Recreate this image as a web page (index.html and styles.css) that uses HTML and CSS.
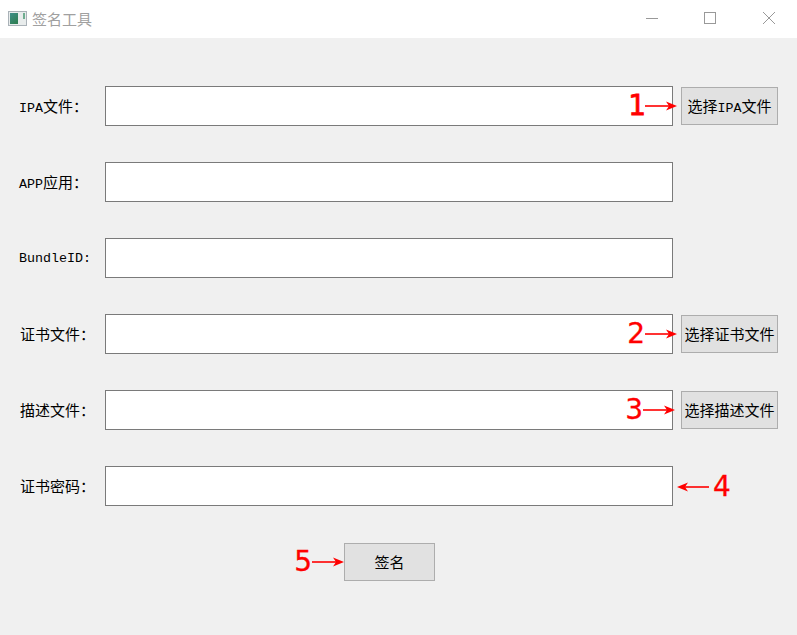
FILE: index.html
```html
<!DOCTYPE html>
<html lang="zh-CN">
<head>
<meta charset="UTF-8">
<meta name="viewport" content="width=device-width, initial-scale=1.0">
<title>签名工具</title>
<link rel="stylesheet" href="styles.css">
</head>
<body>
    <svg class="defs" width="0" height="0">
        <defs>
            <linearGradient id="iconFill" x1="0" y1="0" x2="0.6" y2="1">
                <stop offset="0" stop-color="#3f8f8a"/>
                <stop offset="1" stop-color="#2f7f55"/>
            </linearGradient>
            <symbol id="arrowRight" viewBox="0 0 32 12">
                <path d="M0 6H27" stroke="#f00" stroke-width="1.6" fill="none"/>
                <path d="M32 6L21 1.5L24 6L21 10.5Z" fill="#f00"/>
            </symbol>
            <symbol id="arrowLeft" viewBox="0 0 32 12">
                <path d="M5 6H32" stroke="#f00" stroke-width="1.6" fill="none"/>
                <path d="M0 6L11 1.5L8 6L11 10.5Z" fill="#f00"/>
            </symbol>
        </defs>
    </svg>

    <div class="titlebar">
        <svg class="app-icon" width="19" height="15" viewBox="0 0 19 15">
            <rect x="0.5" y="0.5" width="18" height="14" fill="#e8ecec" stroke="#aab2b8"/>
            <rect x="2" y="2" width="8" height="11" fill="url(#iconFill)"/>
            <rect x="15" y="2" width="2" height="6" fill="#6fae90"/>
        </svg>
        <span class="title">签名工具</span>
        <div class="win-buttons">
            <svg width="12" height="12" viewBox="0 0 12 12"><path d="M0 6.5H12" stroke="#999"/></svg>
            <svg width="12" height="12" viewBox="0 0 12 12"><rect x="0.5" y="0.5" width="11" height="11" fill="none" stroke="#999"/></svg>
            <svg class="win-close" width="12" height="12" viewBox="0 0 12 12"><path d="M0 0L12 12M12 0L0 12" stroke="#999"/></svg>
        </div>
    </div>

    <form class="form">
        <div class="row">
            <label class="label" for="ipa"><span class="latin">IPA</span>文件：</label>
            <div class="field">
                <input type="text" id="ipa">
                <span class="mark mark-1"><b class="num-one">1</b><svg width="32" height="12"><use href="#arrowRight"/></svg></span>
            </div>
            <button type="button" class="btn">选择<span class="latin">IPA</span>文件</button>
        </div>
        <div class="row">
            <label class="label" for="app"><span class="latin">APP</span>应用：</label>
            <div class="field"><input type="text" id="app"></div>
        </div>
        <div class="row">
            <label class="label" for="bundle"><span class="latin">BundleID:</span></label>
            <div class="field"><input type="text" id="bundle"></div>
        </div>
        <div class="row">
            <label class="label label-cn" for="cert">证书文件：</label>
            <div class="field">
                <input type="text" id="cert">
                <span class="mark mark-1"><b>2</b><svg width="32" height="12"><use href="#arrowRight"/></svg></span>
            </div>
            <button type="button" class="btn">选择证书文件</button>
        </div>
        <div class="row">
            <label class="label label-cn" for="desc">描述文件：</label>
            <div class="field">
                <input type="text" id="desc">
                <span class="mark mark-3"><b>3</b><svg width="32" height="12"><use href="#arrowRight"/></svg></span>
            </div>
            <button type="button" class="btn">选择描述文件</button>
        </div>
        <div class="row">
            <label class="label label-cn" for="pwd">证书密码：</label>
            <div class="field">
                <input type="text" id="pwd">
                <span class="mark mark-4"><svg width="32" height="12"><use href="#arrowLeft"/></svg><b>4</b></span>
            </div>
        </div>
        <div class="row-sign">
            <div class="sign-wrap">
                <button type="button" class="btn btn-sign">签名</button>
                <span class="mark mark-5"><b>5</b><svg width="32" height="12"><use href="#arrowRight"/></svg></span>
            </div>
        </div>
    </form>
</body>
</html>
```

FILE: styles.css
```css
html {
    background-color: #f0f0f0;
}
body {
    margin: 0;
    height: 635px;
    overflow: hidden;
    font-family: "Liberation Mono", "Noto Sans CJK SC", monospace;
    font-size: 15px;
    color: #000;
}
.defs {
    position: absolute;
}
.titlebar {
    display: flex;
    align-items: center;
    box-sizing: border-box;
    height: 38px;
    padding-left: 8px;
    padding-bottom: 2px;
    background-color: #fff;
}
.app-icon {
    margin-right: 5px;
}
.title {
    font-family: "Noto Sans CJK SC", sans-serif;
    font-size: 15px;
    color: #a0a0a0;
}
.win-buttons {
    display: flex;
    gap: 46px;
    margin-left: auto;
    margin-right: 22px;
}
.win-close {
    margin-left: 1px;
}
.form {
    display: flex;
    flex-direction: column;
    gap: 36px;
    padding-top: 48px;
}
.row {
    display: flex;
    align-items: center;
    height: 40px;
}
.label {
    width: 86px;
    margin-left: 19px;
    white-space: nowrap;
}
.label-cn {
    width: 85px;
    margin-left: 20px;
}
.latin {
    font-size: 13.33px;
}
.field {
    position: relative;
    width: 568px;
    height: 40px;
}
input {
    display: block;
    box-sizing: border-box;
    width: 100%;
    height: 100%;
    border: 1px solid #7a7a7a;
    background-color: #fff;
    outline: none;
}
.btn {
    box-sizing: border-box;
    width: 97px;
    height: 38px;
    margin-left: 8px;
    padding: 0;
    border: 1px solid #adadad;
    background-color: #e1e1e1;
    font: inherit;
    color: #000;
}
.row-sign {
    padding-left: 344px;
    margin-top: 1px;
}
.sign-wrap {
    position: relative;
    width: 91px;
}
.btn-sign {
    width: 91px;
    margin-left: 0;
}
.mark {
    position: absolute;
    display: flex;
    align-items: center;
    height: 30px;
    font-family: "DejaVu Sans", sans-serif;
    font-size: 28px;
    line-height: 30px;
    color: #f00;
    -webkit-text-stroke: 0.3px #f00;
}
.mark b {
    font-weight: normal;
}
.mark .num-one {
    margin-right: -1px;
    -webkit-text-stroke: 0.8px #f00;
}
.mark-1 {
    right: -4px;
    top: 5px;
}
.mark-3 {
    right: -2px;
    top: 5px;
}
.mark-4 {
    left: 572px;
    top: 6px;
    gap: 4px;
}
.mark-5 {
    right: 91px;
    top: 4px;
}
```
